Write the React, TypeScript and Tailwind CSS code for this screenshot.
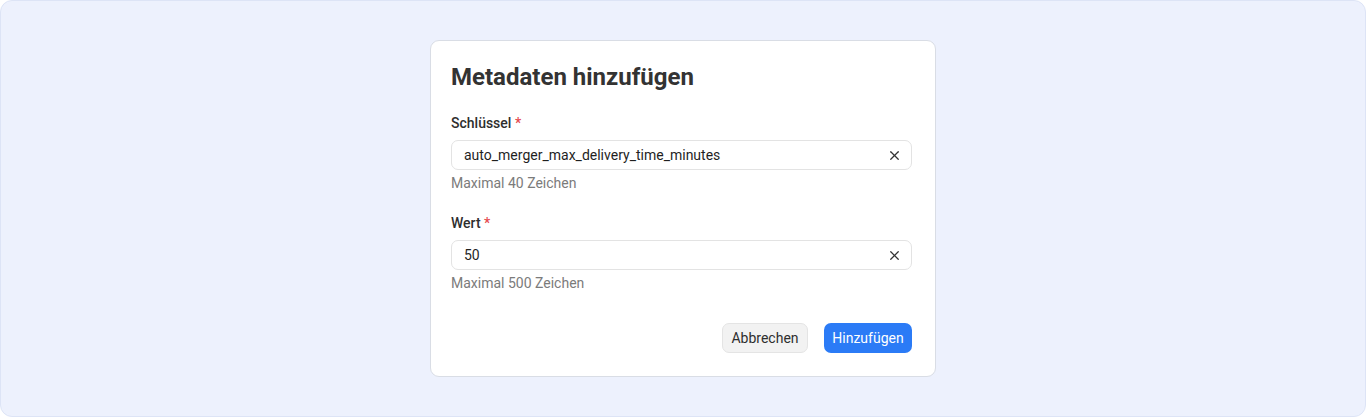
import React from 'react';
import { X } from 'lucide-react';

interface FieldProps {
  label: string;
  value: string;
  hint: string;
}

const Field: React.FC<FieldProps> = ({ label, value, hint }) => (
  <div className="flex flex-col">
    <label className="text-[14px] leading-5 font-medium text-[#2e2e2e]">
      {label} <span className="text-[#e5484d]">*</span>
    </label>
    <div className="mt-[7px] h-[30px] flex items-center rounded-[7px] border border-[#e3e3e3] bg-white pl-3 pr-[9px]">
      <span className="flex-1 text-[14px] text-[#1f1f1f]">{value}</span>
      <X size={15} strokeWidth={2} className="text-[#333]" />
    </div>
    <p className="mt-[3px] text-[14px] leading-5 text-[#7b7b7b]">{hint}</p>
  </div>
);

export default function App() {
  return (
    <div
      className="w-[1366px] h-[417px] rounded-xl border border-[#dde4f6] bg-[#edf1fd] flex justify-center pt-[39px]"
      style={{ fontFamily: 'Roboto, "Noto Sans", sans-serif' }}
    >
      <div className="w-[506px] h-[337px] rounded-[9px] border border-[#d9dde5] bg-white pl-5 pr-[23px] pt-5 pb-[23px] flex flex-col">
        <h2 className="text-[24px] leading-8 font-bold text-[#333]">Metadaten hinzufügen</h2>
        <div className="mt-5 flex flex-col gap-5">
          <Field label="Schlüssel" value="auto_merger_max_delivery_time_minutes" hint="Maximal 40 Zeichen" />
          <Field label="Wert" value="50" hint="Maximal 500 Zeichen" />
        </div>
        <div className="mt-auto flex justify-end gap-4">
          <button className="h-[30px] w-[86px] rounded-[7px] border border-[#e4e4e4] bg-[#f2f2f2] text-[14px] text-[#2e2e2e]">
            Abbrechen
          </button>
          <button className="h-[30px] w-[88px] rounded-[7px] bg-[#2b7bf6] text-[14px] text-white">
            Hinzufügen
          </button>
        </div>
      </div>
    </div>
  );
}
